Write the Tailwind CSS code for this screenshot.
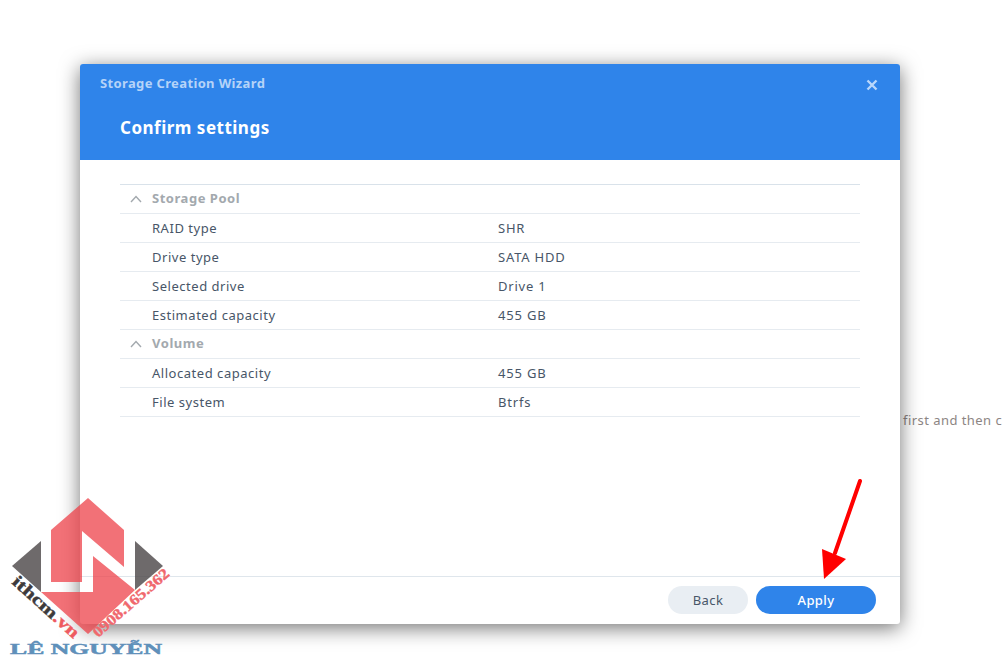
<!doctype html>
<html lang="en">
<head>
<meta charset="utf-8" />
<title>Storage Creation Wizard</title>
<script src="https://cdn.jsdelivr.net/npm/@tailwindcss/browser@4"></script>
</head>
<body class="bg-white overflow-hidden font-['Noto_Sans','Open_Sans',sans-serif]">
<div class="relative w-[1003px] h-[664px] overflow-hidden pt-[64px] pl-[80px]">
  <!-- page text behind the dialog -->
  <p class="absolute left-[903px] top-[411px] text-[13px] leading-[18px] tracking-[0.45px] whitespace-nowrap text-[#8c8583]">first and then c</p>

  <div class="relative flex flex-col w-[820px] h-[560px] bg-white rounded-[3px] shadow-[0_4px_20px_rgba(0,0,0,0.55)]">
    <header class="h-[96px] shrink-0 bg-[#2f84ea] rounded-t-[3px] pl-[20px] pr-[20px]">
      <div class="flex items-center justify-between h-[40px]">
        <span class="text-[13px] font-bold tracking-[0.36px] text-[#b5d3f8]">Storage Creation Wizard</span>
        <svg class="w-[12px] h-[12px] mt-[1px] mr-[2px]" viewBox="0 0 12 12" fill="none" stroke="#b9d7fb" stroke-width="2.4"><path d="M1.5 1.5l9 9M10.5 1.5l-9 9"/></svg>
      </div>
      <h1 class="pl-[20px] mt-[12px] text-[17px] leading-[24px] font-bold tracking-[0.5px] text-white">Confirm settings</h1>
    </header>

    <main class="flex-1 px-[40px] pt-[24px]">
      <div class="border-t border-[#d9e2ea] text-[13px] tracking-[0.53px] text-[#485668]">
        <div class="flex items-center h-[29px] border-b border-[#e6ebf0] font-bold text-[#a3a9ae]">
          <svg class="w-[12px] h-[8px] ml-[10px] mr-[10px]" viewBox="0 0 12 8" fill="none" stroke="#a3a9ae" stroke-width="1.4"><path d="M1 7l5-5.5L11 7"/></svg>
          <span>Storage Pool</span>
        </div>
        <div class="flex items-center h-[29px] border-b border-[#e6ebf0] pl-[32px] pt-[2px]"><span class="w-[346px]">RAID type</span><span class="tracking-[0.8px]">SHR</span></div>
        <div class="flex items-center h-[29px] border-b border-[#e6ebf0] pl-[32px] pt-[2px]"><span class="w-[346px]">Drive type</span><span class="tracking-[0.8px]">SATA HDD</span></div>
        <div class="flex items-center h-[29px] border-b border-[#e6ebf0] pl-[32px] pt-[2px]"><span class="w-[346px]">Selected drive</span><span class="tracking-[0.8px]">Drive 1</span></div>
        <div class="flex items-center h-[29px] border-b border-[#e6ebf0] pl-[32px] pt-[2px]"><span class="w-[346px]">Estimated capacity</span><span class="tracking-[0.8px]">455 GB</span></div>
        <div class="flex items-center h-[29px] border-b border-[#e6ebf0] font-bold text-[#a3a9ae]">
          <svg class="w-[12px] h-[8px] ml-[10px] mr-[10px]" viewBox="0 0 12 8" fill="none" stroke="#a3a9ae" stroke-width="1.4"><path d="M1 7l5-5.5L11 7"/></svg>
          <span>Volume</span>
        </div>
        <div class="flex items-center h-[29px] border-b border-[#e6ebf0] pl-[32px] pt-[2px]"><span class="w-[346px]">Allocated capacity</span><span class="tracking-[0.8px]">455 GB</span></div>
        <div class="flex items-center h-[29px] border-b border-[#e6ebf0] pl-[32px] pt-[2px]"><span class="w-[346px]">File system</span><span class="tracking-[0.8px]">Btrfs</span></div>
      </div>
    </main>

    <footer class="flex justify-end items-start gap-[8px] h-[48px] shrink-0 border-t border-[#dfe6ec] pt-[9px] pr-[24px] text-[13px] tracking-[0.4px]">
      <button class="w-[80px] h-[28px] pt-[2px] rounded-full bg-[#e9eef3] text-[#485668]">Back</button>
      <button class="w-[120px] h-[28px] pt-[2px] rounded-full bg-[#2f84ea] text-white font-medium">Apply</button>
    </footer>
  </div>

  <!-- red arrow drawn on top of the screenshot -->
  <svg class="absolute left-[815px] top-[475px] w-[50px] h-[110px]" viewBox="815 475 50 110">
    <path d="M860 481L835 553" stroke="#ff0000" stroke-width="4" stroke-linecap="round" fill="none"/>
    <path d="M822 549L846 559L824 579Z" fill="#ff0000"/>
  </svg>

  <!-- watermark logo -->
  <svg class="absolute left-0 top-[490px] w-[180px] h-[174px]" viewBox="0 490 180 174">
    <g fill="#ee3f47" fill-opacity="0.74">
      <path d="M88 498L124 530V567L82 531V582H51V530Z"/>
      <path d="M41 592H93V556L135 590L88 634Z"/>
    </g>
    <g fill="#4a4546" fill-opacity="0.8">
      <path d="M12 566L41 541V592Z"/>
      <path d="M135 541L163 566L135 590Z"/>
    </g>
    <text transform="translate(11 583) rotate(42)" font-family="Liberation Serif" font-weight="700" font-size="17" textLength="84" lengthAdjust="spacingAndGlyphs" stroke="#3d3a3b" stroke-width="0.4" fill="#3d3a3b">ithcm<tspan fill="#ee5a60" stroke="#ee5a60">.vn</tspan></text>
    <text transform="translate(98 638) rotate(-41)" font-family="Liberation Serif" font-weight="700" font-size="15" textLength="96" lengthAdjust="spacingAndGlyphs" stroke="#f0686d" stroke-width="0.4" fill="#f0686d">0908.165.362</text>
    <text x="10" y="654" font-family="Liberation Serif" font-weight="700" font-size="15" textLength="152" lengthAdjust="spacingAndGlyphs" stroke="#5f90ba" stroke-width="0.5" fill="#5f90ba">LÊ NGUYỄN</text>
  </svg>
</div>
</body>
</html>
